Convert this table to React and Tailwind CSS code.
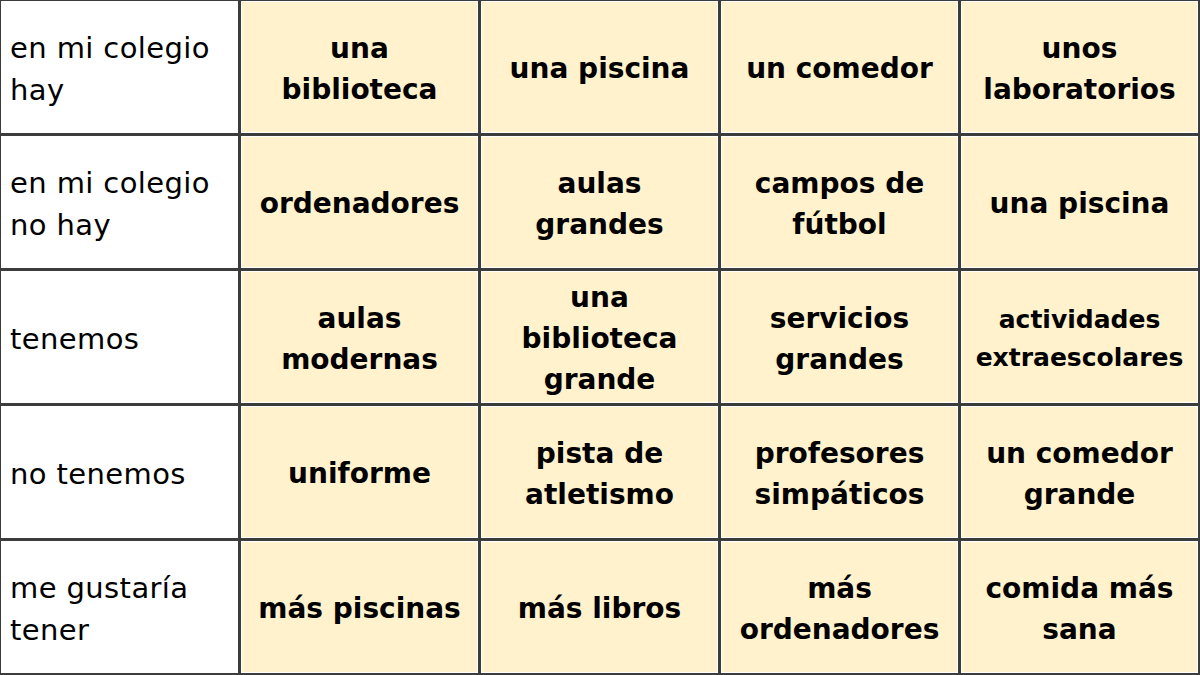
import React from 'react';

const rows = [
  { label: ['en mi colegio', 'hay'], cells: [['una', 'biblioteca'], ['una piscina'], ['un comedor'], ['unos', 'laboratorios']] },
  { label: ['en mi colegio', 'no hay'], cells: [['ordenadores'], ['aulas', 'grandes'], ['campos de', 'fútbol'], ['una piscina']] },
  { label: ['tenemos'], cells: [['aulas', 'modernas'], ['una', 'biblioteca', 'grande'], ['servicios', 'grandes'], ['actividades', 'extraescolares']] },
  { label: ['no tenemos'], cells: [['uniforme'], ['pista de', 'atletismo'], ['profesores', 'simpáticos'], ['un comedor', 'grande']] },
  { label: ['me gustaría', 'tener'], cells: [['más piscinas'], ['más libros'], ['más', 'ordenadores'], ['comida más', 'sana']] },
];

const font = { fontFamily: '"DejaVu Sans", "Liberation Sans", sans-serif' };

const App = () => {
  return (
    <div className="w-[1200px] h-[675px] bg-white overflow-hidden">
      <div
        className="w-[1200px] h-[675px] grid grid-cols-5 grid-rows-5 gap-[3px] bg-[#3c3c3c] pt-[1px] pl-[1px] pr-[2px] pb-[2px]"
        style={font}
      >
        {rows.map((row, i) => (
          <React.Fragment key={i}>
            <div className="bg-white flex flex-col justify-center pl-[9px] pt-[3px] text-[29px] leading-[42px] text-black tracking-[0.4px]">
              {row.label.map((l, j) => (
                <span key={j}>{l}</span>
              ))}
            </div>
            {row.cells.map((cell, j) => {
              const small = cell.includes('extraescolares');
              return (
                <div key={j} className="bg-white p-[1px]">
                  <div
                    className={
                      'w-full h-full bg-[#fff2cc] flex flex-col items-center justify-center pt-[3px] text-center font-bold text-black ' +
                      (small ? 'text-[25px] leading-[38px]' : 'text-[28px] leading-[41px]')
                    }
                  >
                    {cell.map((t, k) => (
                      <span key={k} className="whitespace-nowrap">{t}</span>
                    ))}
                  </div>
                </div>
              );
            })}
          </React.Fragment>
        ))}
      </div>
    </div>
  );
};

export default App;
